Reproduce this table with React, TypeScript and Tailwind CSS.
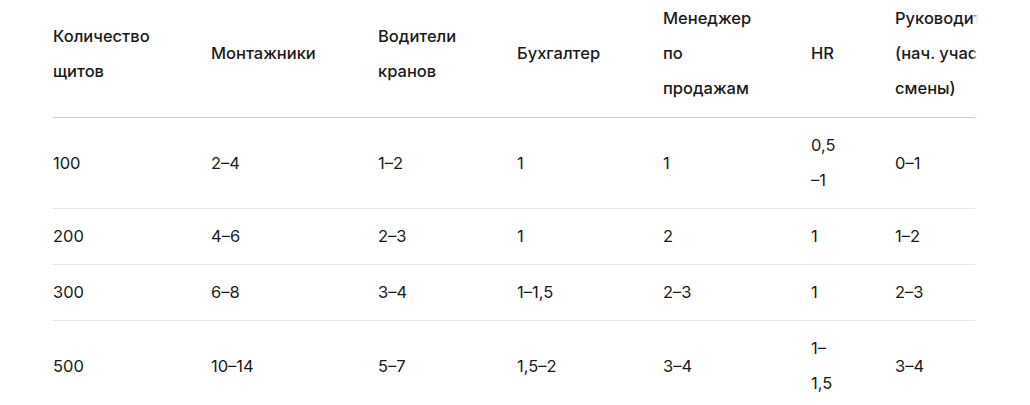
import React from 'react';

const headers: React.ReactNode[] = [
  <>Количество<br />щитов</>,
  'Монтажники',
  <>Водители<br />кранов</>,
  'Бухгалтер',
  <>Менеджер<br />по<br />продажам</>,
  'HR',
  <>Руководитель<br />(нач. участка,<br />смены)</>,
];

const rows: { cells: React.ReactNode[] }[] = [
  { cells: ['100', '2–4', '1–2', '1', '1', <>0,5<br />–1</>, '0–1'] },
  { cells: ['200', '4–6', '2–3', '1', '2', '1', '1–2'] },
  { cells: ['300', '6–8', '3–4', '1–1,5', '2–3', '1', '2–3'] },
  { cells: ['500', '10–14', '5–7', '1,5–2', '3–4', <>1–<br />1,5</>, '3–4'] },
];

const colWidths = ['w-[158px]', 'w-[167px]', 'w-[139px]', 'w-[146px]', 'w-[148px]', 'w-[84px]', 'w-[160px]'];

export default function App() {
  return (
    <div className="h-[405px] w-[1030px] overflow-hidden bg-white">
      <div className="relative ml-[53px] w-[925px] overflow-hidden">
        <table
          className="w-[1002px] table-fixed border-collapse text-left text-[16.5px] leading-[35px] text-[#1a1a1a]"
          style={{ fontFamily: 'Inter, "Noto Sans", sans-serif' }}
        >
          <colgroup>
            {colWidths.map((w, i) => (
              <col key={i} className={w} />
            ))}
          </colgroup>
          <thead>
            <tr className="border-b border-[#c9c9c9]">
              {headers.map((h, i) => (
                <th key={i} className="whitespace-nowrap pt-[1px] pb-[11px] align-middle font-medium">
                  {h}
                </th>
              ))}
            </tr>
          </thead>
          <tbody>
            {rows.map((r, ri) => (
              <tr key={ri} className="border-b border-[#e6e6e6]">
                {r.cells.map((c, ci) => (
                  <td key={ci} className="whitespace-nowrap py-[10px] align-middle">
                    {c}
                  </td>
                ))}
              </tr>
            ))}
          </tbody>
        </table>
        <div className="pointer-events-none absolute inset-y-0 right-0 w-[6px] bg-gradient-to-r from-transparent to-white" />
      </div>
    </div>
  );
}
